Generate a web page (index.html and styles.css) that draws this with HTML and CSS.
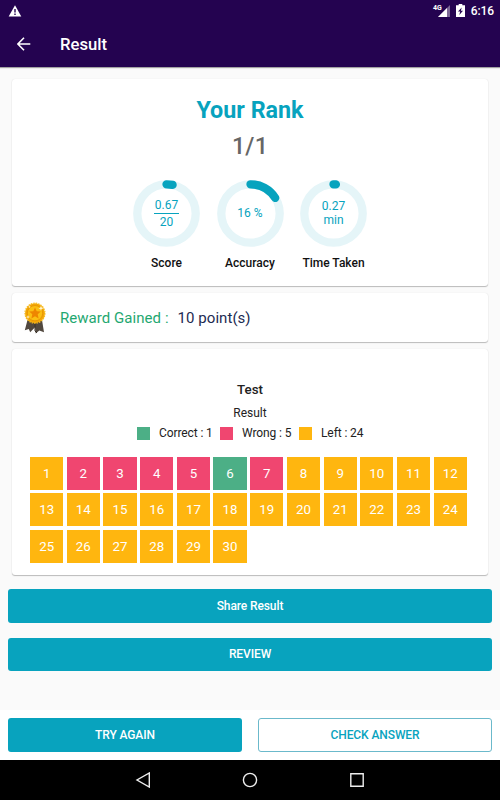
FILE: index.html
```html
<!DOCTYPE html>
<html lang="en">
<head>
<meta charset="utf-8">
<title>Result</title>
<link rel="stylesheet" href="styles.css">
</head>
<body>
<div class="screen">
  <header class="header">
    <div class="status">
      <svg class="warn" width="14" height="12" viewBox="0 0 14 12"><path d="M7 .3 13.3 11.5H.7z" fill="#fff"/><path d="M7 4v3.6M7 8.6v1.5" stroke="#240350" stroke-width="1.4"/></svg>
      <span class="network">4G</span>
      <svg class="signal" width="12" height="12" viewBox="0 0 12 12"><path d="M12 0v12H0z" fill="#7c6896"/><path d="M9 3v9H0z" fill="#fff"/></svg>
      <svg class="battery" width="9" height="13" viewBox="0 0 9 13"><path d="M2.7 0h3.6v1.3H9V13H0V1.3h2.7z" fill="#fff"/><path d="M5.7 3.5 2 7.6h2.2L3.3 11 7 6.7H4.9z" fill="#240350"/></svg>
      <span class="clock">6:16</span>
    </div>
    <div class="toolbar">
      <svg class="back" width="14" height="14" viewBox="0 0 14 14"><path d="M13.3 7H1.3M7 .8.9 7 7 13.200" fill="none" stroke="#fff" stroke-width="1.6"/></svg>
      <h1 class="title">Result</h1>
    </div>
  </header>

  <main class="content">
    <section class="card rank-card">
      <h2 class="rank-title">Your Rank</h2>
      <div class="rank-value">1/1</div>
      <div class="stats">
        <div class="stat">
          <div class="dial">
            <svg class="ring" viewBox="0 0 67 67"><circle class="track" cx="33.5" cy="33.5" r="29.2"/><path class="arc" d="M33.5 4.3A29.2 29.2 0 0 1 39.6 4.9"/></svg>
            <div class="dial-text fraction"><span class="over">0.67</span><span class="under">20</span></div>
          </div>
          <div class="stat-name">Score</div>
        </div>
        <div class="stat">
          <div class="dial">
            <svg class="ring" viewBox="0 0 67 67"><circle class="track" cx="33.5" cy="33.5" r="29.2"/><path class="arc" d="M33.5 4.3A29.2 29.2 0 0 1 58.2 17.9"/></svg>
            <div class="dial-text">16 %</div>
          </div>
          <div class="stat-name">Accuracy</div>
        </div>
        <div class="stat">
          <div class="dial">
            <svg class="ring" viewBox="0 0 67 67"><circle class="track" cx="33.5" cy="33.5" r="29.2"/><path class="arc" d="M33.5 4.3A29.2 29.2 0 0 1 35.9 4.4"/></svg>
            <div class="dial-text time">0.27<br>min</div>
          </div>
          <div class="stat-name">Time Taken</div>
        </div>
      </div>
    </section>

    <section class="card reward-card">
      <svg class="medal" width="22" height="32" viewBox="0 0 22 32">
        <path d="M3.5 18 .8 28.2l4-1.2 1.4 3.3 4.8-5 .7 6.2 3.6-3 4.7 1.8L18 18z" fill="#51483f"/>
        <path d="M11 20v9l2 2" fill="none" stroke="#383028"/>
        <circle cx="11" cy="11.2" r="10" fill="#f3a607" stroke="#f7bd20" stroke-width="1.2" stroke-dasharray="1.5 1"/>
        <circle cx="11" cy="11.2" r="7.7" fill="#fbbf12" stroke="#e89605"/>
        <path d="m11 5.4 1.7 3.8 4.1.4-3.1 2.7.9 4.1-3.6-2.1-3.6 2.1.9-4.1-3.1-2.7 4.1-.4z" fill="#ee8600"/>
        <path d="m17 3.8.7 1.8 1.8.7-1.8.7-.7 1.8-.7-1.8-1.8-.7 1.8-.7zM4 13l.5 1.5L6 15l-1.5.5L4 17l-.5-1.5L2 15l1.500-.5zM5.500 3.500l.4 1 1 .4-1 .4-.4 1-.4-1-1-.4 1-.4z" fill="#fff6d0"/>
      </svg>
      <span class="reward-label">Reward Gained :</span>
      <span class="reward-value">10 point(s)</span>
    </section>

    <section class="card test-card">
      <h3 class="test-title">Test</h3>
      <div class="test-subtitle">Result</div>
      <div class="legend">
        <span class="key correct"></span><span class="key-text key-correct">Correct : 1</span>
        <span class="key wrong"></span><span class="key-text key-wrong">Wrong : 5</span>
        <span class="key left"></span><span class="key-text">Left : 24</span>
      </div>
      <div class="grid">
        <span class="tile left">1</span><span class="tile wrong">2</span><span class="tile wrong">3</span><span class="tile wrong">4</span><span class="tile wrong">5</span><span class="tile correct">6</span><span class="tile wrong">7</span><span class="tile left">8</span><span class="tile left">9</span><span class="tile left">10</span><span class="tile left">11</span><span class="tile left">12</span>
        <span class="tile left">13</span><span class="tile left">14</span><span class="tile left">15</span><span class="tile left">16</span><span class="tile left">17</span><span class="tile left">18</span><span class="tile left">19</span><span class="tile left">20</span><span class="tile left">21</span><span class="tile left">22</span><span class="tile left">23</span><span class="tile left">24</span>
        <span class="tile left">25</span><span class="tile left">26</span><span class="tile left">27</span><span class="tile left">28</span><span class="tile left">29</span><span class="tile left">30</span>
      </div>
    </section>

    <div class="actions">
      <button class="button">Share Result</button>
      <button class="button">REVIEW</button>
    </div>
  </main>

  <footer class="bottom">
    <button class="button">TRY AGAIN</button>
    <button class="button outline">CHECK ANSWER</button>
  </footer>

  <nav class="system-nav">
    <svg width="16" height="16" viewBox="0 0 16 16"><path d="M14.300 1v14L2 8z"/></svg>
    <svg width="16" height="16" viewBox="0 0 16 16"><circle cx="8" cy="8" r="6.600"/></svg>
    <svg width="16" height="16" viewBox="0 0 16 16"><path d="M1.800 1.800h12.400v12.400H1.800z"/></svg>
  </nav>
</div>
</body>
</html>
```
FILE: styles.css
```css
* { box-sizing: border-box; }

body {
  margin: 0;
  font-family: Roboto, "Liberation Sans", sans-serif;
  background: #fafafa;
}

h1, h2, h3 { margin: 0; }
svg { display: block; flex: none; }

.screen {
  width: 500px;
  height: 800px;
  display: flex;
  flex-direction: column;
  overflow: hidden;
}

.header {
  height: 67px;
  background: #240350;
  color: #fff;
  box-shadow: 0 1px 1px rgba(0, 0, 0, .35);
  flex: none;
}

.status {
  height: 22px;
  display: flex;
  align-items: center;
  padding: 0 6px 0 8px;
}

.warn { margin-right: auto; margin-top: -1px; }
.network { font-size: 7px; font-weight: 700; line-height: 8px; align-self: flex-start; margin-top: 4px; }
.signal { margin-left: -4px; }
.battery { margin: -1px 6px 0 6px; }
.clock { font-size: 12px; font-weight: 500; letter-spacing: -.1px; }

.toolbar {
  height: 45px;
  display: flex;
  align-items: center;
  padding-left: 16.500px;
}

.back { margin-top: -1px; }
.title { margin-left: 29.500px; font-size: 16.700px; font-weight: 500; line-height: 20px; }

.content {
  flex: 1;
  display: flex;
  flex-direction: column;
  gap: 7px;
  padding: 12px 12px 0;
}

.card {
  background: #fff;
  border-radius: 3px;
  box-shadow: 0 1px 1px rgba(0, 0, 0, .25), 0 0 1px rgba(0, 0, 0, .12);
  flex: none;
}

.rank-card { height: 207px; padding-top: 17px; text-align: center; }
.rank-title { font-size: 23.300px; line-height: 28px; font-weight: 700; color: #07a3be; }
.rank-value { margin-top: 8px; font-size: 23.300px; line-height: 28px; font-weight: 500; color: #666; letter-spacing: .2px; }

.stats { display: flex; justify-content: center; margin-top: 19.500px; }
.stat { width: 83.500px; display: flex; flex-direction: column; align-items: center; }
.dial { width: 67px; height: 67px; display: grid; place-items: center; }
.ring { width: 67px; height: 67px; grid-area: 1 / 1; }
.track { fill: none; stroke: #e5f5f8; stroke-width: 8.300; }
.arc { fill: none; stroke: #07a3be; stroke-width: 8.300; stroke-linecap: round; }
.dial-text { grid-area: 1 / 1; font-size: 12px; line-height: 14px; color: #07a3be; }
.fraction { display: flex; flex-direction: column; width: 25px; }
.over { padding-bottom: 1px; border-bottom: 1px solid #07a3be; }
.under { padding-top: 1px; }
.stat-name { margin-top: 9.500px; font-size: 12px; line-height: 14px; font-weight: 500; color: #111; white-space: nowrap; }

.reward-card { height: 49px; display: flex; align-items: center; padding-left: 12px; font-size: 15px; letter-spacing: .05px; }
.reward-label { margin-left: 14px; color: #1fa871; }
.reward-value { margin-left: 9px; color: #1d2b52; }

.test-card { height: 226px; padding: 33px 18px 0; text-align: center; color: #222; }
.test-title { font-size: 13.300px; line-height: 16px; font-weight: 500; }
.test-subtitle { margin-top: 8px; font-size: 12px; line-height: 14px; }
.legend { display: flex; align-items: center; margin: 6px 0 0 107px; height: 14px; font-size: 12px; letter-spacing: -.1px; white-space: nowrap; }
.key { width: 13px; height: 13px; margin-right: 9px; }
.key-correct { width: 61px; text-align: left; }
.key-wrong { width: 57px; text-align: left; }

.grid {
  margin-top: 16.700px;
  display: grid;
  grid-template-columns: repeat(12, 33.300px);
  grid-auto-rows: 33.200px;
  gap: 3.400px;
}
.tile { display: flex; align-items: center; justify-content: center; color: #fff; font-size: 13.300px; }
.left { background: #ffb60f; }
.wrong { background: #f04670; }
.correct { background: #4caf86; }

.actions { display: flex; flex-direction: column; gap: 15px; margin: 7.400px -4px 0; }

.button {
  height: 33.400px;
  padding: 0;
  border: 0;
  border-radius: 3px;
  background: #08a3be;
  color: #fff;
  font: 500 12px/14px Roboto, "Liberation Sans", sans-serif;
  letter-spacing: -.1px;
}

.bottom {
  height: 50px;
  display: grid;
  grid-template-columns: 1fr 1fr;
  gap: 16px;
  padding: 8px;
  background: #fff;
  flex: none;
}
.bottom .button { height: 34px; }
.bottom .outline { background: #fff; border: 1px solid #6bb9cb; color: #08a3be; }

.system-nav {
  height: 40px;
  display: flex;
  align-items: center;
  justify-content: center;
  gap: 91px;
  background: #000;
  flex: none;
}
.system-nav svg { fill: none; stroke: #eee; stroke-width: 1.400; }
```
